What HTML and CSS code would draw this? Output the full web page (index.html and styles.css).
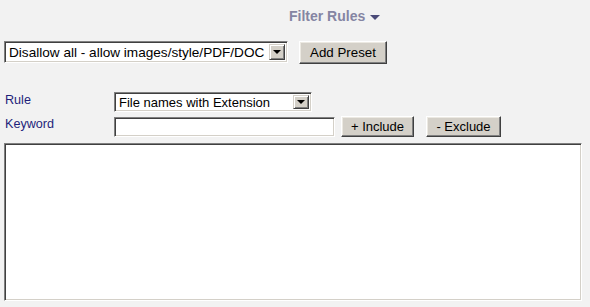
FILE: index.html
```html
<!DOCTYPE html>
<html>
<head>
    <meta charset="utf-8" />
    <title>Filter Rules</title>
    <link rel="stylesheet" href="styles.css">
</head>
<body>
    <div class="page">
        <div class="head">
            <span class="title">Filter Rules</span>
            <span class="arrow"></span>
        </div>

        <div class="preset-row">
            <div class="combo preset">
                <select>
                    <option>Disallow all - allow images/style/PDF/DOC</option>
                </select>
                <span class="drop"><i></i></span>
            </div>
            <button class="btn add">Add Preset</button>
        </div>

        <div class="rules">
            <label class="lbl">Rule</label>
            <div class="combo rule">
                <select>
                    <option>File names with Extension</option>
                </select>
                <span class="drop"><i></i></span>
            </div>

            <label class="lbl">Keyword</label>
            <div class="kw-row">
                <input type="text" class="kw" />
                <button class="btn inc">+ Include</button>
                <button class="btn exc">- Exclude</button>
            </div>
        </div>

        <textarea class="list"></textarea>
    </div>
</body>
</html>
```

FILE: styles.css
```css
* {
    padding: 0;
    margin: 0;
    box-sizing: border-box;
}

body {
    background-color: #f2f2f2;
    font-family: "Liberation Sans", Arial, sans-serif;
    font-size: 13px;
    color: #000;
}

.page {
    width: 590px;
    height: 307px;
    padding: 0 4px;
}

.head {
    display: flex;
    align-items: center;
    height: 30px;
    padding-left: 285px;
    padding-top: 1px;
}

.title {
    font-size: 14px;
    font-weight: bold;
    color: #8585a3;
}

.arrow {
    width: 0;
    height: 0;
    margin-left: 5px;
    margin-top: 3px;
    border-left: 5px solid transparent;
    border-right: 5px solid transparent;
    border-top: 5px solid #4a4a78;
}

.preset-row {
    display: flex;
    align-items: flex-start;
    margin-top: 11px;
}

/* sunken windows-style box */
.combo, .kw, .list {
    background-color: #fff;
    border: 1px solid;
    border-color: #808080 #fff #fff #808080;
    box-shadow: inset 1px 1px 0 #404040, inset -1px -1px 0 #d4d0c8;
}

.combo {
    position: relative;
    display: flex;
}

.combo select {
    appearance: none;
    -webkit-appearance: none;
    border: 0;
    background: transparent;
    font-family: "Liberation Sans", Arial, sans-serif;
    font-size: 13px;
    color: #000;
    width: 100%;
    padding: 0 0 0 4px;
    outline: none;
}

.preset select {
    font-size: 13.6px;
}

.combo .drop {
    position: absolute;
    top: 2px;
    right: 2px;
    bottom: 2px;
    width: 16px;
    background-color: #d4d0c8;
    border: 1px solid;
    border-color: #d4d0c8 #404040 #404040 #d4d0c8;
    box-shadow: inset 1px 1px 0 #fff, inset -1px -1px 0 #808080;
    display: flex;
    align-items: center;
    justify-content: center;
}

.combo .drop i {
    width: 0;
    height: 0;
    border-left: 4px solid transparent;
    border-right: 4px solid transparent;
    border-top: 4px solid #000;
}

.preset {
    width: 284px;
    height: 22px;
}

.btn {
    font-family: "Liberation Sans", Arial, sans-serif;
    font-size: 13px;
    color: #000;
    background-color: #d4d0c8;
    border: 1px solid;
    border-color: #fff #404040 #404040 #fff;
    box-shadow: inset -1px -1px 0 #808080, inset 1px 1px 0 #ece9e2;
}

.add {
    width: 88px;
    height: 23px;
    margin-left: 11px;
    font-size: 13.3px;
}

.rules {
    display: grid;
    grid-template-columns: 110px auto;
    row-gap: 4px;
    margin-top: 28px;
    align-items: start;
}

.lbl {
    color: #1f1f7a;
    font-size: 12.6px;
    padding-left: 1px;
    line-height: 16px;
}

.rule {
    width: 198px;
    height: 20px;
}

.kw-row {
    display: flex;
    align-items: center;
}

.kw {
    width: 221px;
    height: 20px;
    outline: none;
}

.inc, .exc {
    font-size: 13px;
    height: 21px;
}

.inc {
    width: 73px;
    margin-left: 6px;
}

.exc {
    width: 75px;
    margin-left: 12px;
}

.list {
    display: block;
    width: 578px;
    height: 158px;
    margin-top: 6px;
    resize: none;
    outline: none;
}
```
